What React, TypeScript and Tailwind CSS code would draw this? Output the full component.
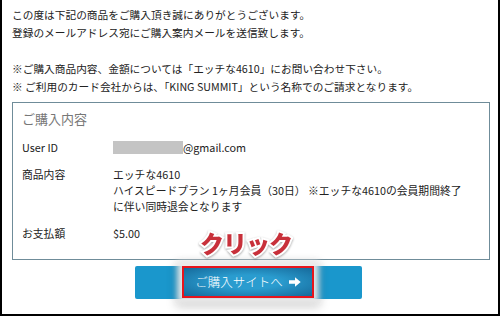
import React from "react";

const jp = { fontFamily: '"Noto Sans CJK JP", "Noto Sans", sans-serif' };

export default function App() {
  return (
    <div
      className="relative w-[500px] h-[316px] overflow-hidden border-x-2 border-b-2 border-black bg-white text-[#222]"
      style={jp}
    >
      <div className="pl-[10px] pt-[6px] text-[10.7px] leading-[18px]">
        <p>この度は下記の商品をご購入頂き誠にありがとうございます。</p>
        <p>登録のメールアドレス宛にご購入案内メールを送信致します。</p>
        <p>&nbsp;</p>
        <p>※ご購入商品内容、金額については「エッチな4610」にお問い合わせ下さい。</p>
        <p>※ ご利用のカード会社からは、「KING SUMMIT」という名称でのご請求となります。</p>
      </div>

      <div className="ml-[10px] mt-[6px] w-[478px] border border-[#6f8c99] pl-[9px] pt-[6px] pb-[18px]">
        <div className="text-[13px] leading-[20px] text-[#777]">ご購入内容</div>
        <div className="mt-[10px] flex flex-col gap-[11px] text-[10.8px] leading-[16px]">
          <div className="flex">
            <div className="w-[91px] shrink-0">User ID</div>
            <div className="flex items-center">
              <span className="inline-block h-[13px] w-[70px] bg-[#c4c4c4]" />
              <span>@gmail.com</span>
            </div>
          </div>
          <div className="flex">
            <div className="w-[91px] shrink-0">商品内容</div>
            <div>
              <div>エッチな4610</div>
              <div>ハイスピードプラン 1ヶ月会員（30日） ※エッチな4610の会員期間終了</div>
              <div>に伴い同時退会となります</div>
            </div>
          </div>
          <div className="flex">
            <div className="w-[91px] shrink-0">お支払額</div>
            <div>$5.00</div>
          </div>
        </div>
      </div>

      <div className="relative ml-[133px] mt-[6px] h-[33px] w-[227px] rounded-[2px] bg-[#1a97cc]">
        <div className="absolute left-[47px] top-0 h-[32px] w-[132px] border-[2.5px] border-[#e8141c] bg-[#1a86b8] shadow-[0_0_6px_5px_rgba(235,235,235,0.95),0_3px_10px_6px_rgba(0,0,0,0.18)]">
          <div className="flex h-full w-full items-center justify-center gap-[6px] bg-[radial-gradient(ellipse_at_center,#2a9ccf_35%,#16699a_100%)] text-[12.5px] font-light text-white">
            <span>ご購入サイトへ</span>
            <svg width="12" height="10" viewBox="0 0 12 10">
              <path d="M0 3.2h6V0.3L11.7 5 6 9.7V6.8H0z" fill="white" />
            </svg>
          </div>
        </div>
      </div>

      <div
        className="absolute left-[198px] top-[229px] text-[24px] font-black leading-[28px] tracking-[-1px] text-[#c8303a] [paint-order:stroke_fill] [-webkit-text-stroke:4px_white] [filter:drop-shadow(0_1px_1px_rgba(0,0,0,0.35))]"
        style={jp}
      >
        クリック
      </div>
    </div>
  );
}
